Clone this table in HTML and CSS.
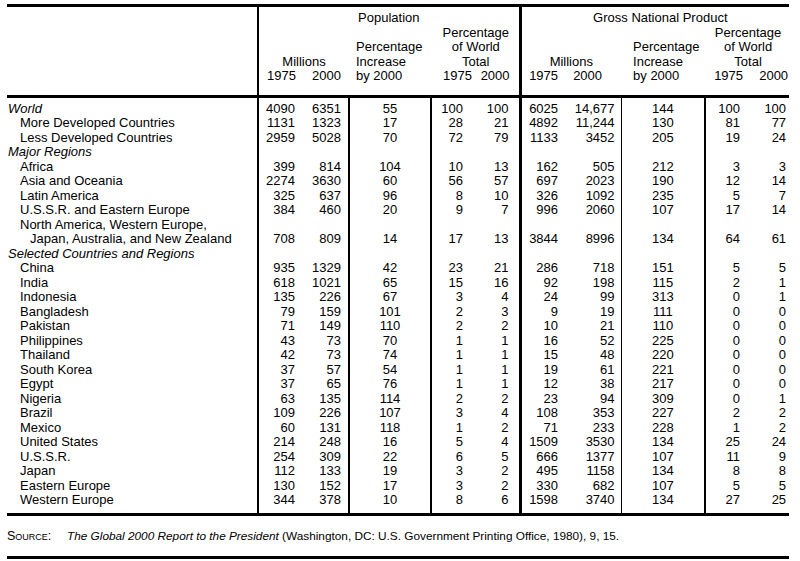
FILE: index.html
```html
<!DOCTYPE html>
<html>
<head>
<meta charset="utf-8">
<link rel="stylesheet" href="styles.css">
</head>
<body>
<div class="page">
  <div class="frame">
    <table class="data">
      <colgroup>
        <col class="w-label"><col class="w-p75"><col class="w-p00"><col class="w-pinc"><col class="w-pw75"><col class="w-pw00">
        <col class="w-g75"><col class="w-g00"><col class="w-ginc"><col class="w-gw75"><col class="w-gw00">
      </colgroup>
      <thead>
        <tr class="h1">
          <th class="corner" rowspan="3"></th>
          <th class="grp" colspan="5">Population</th>
          <th class="grp gnp" colspan="5">Gross National Product</th>
        </tr>
        <tr class="h2">
          <th class="mil" colspan="2">Millions</th>
          <th class="inc pinc" rowspan="2">Percentage<br>Increase<br>by 2000</th>
          <th class="wt" colspan="2">Percentage<br>of World<br>Total</th>
          <th class="mil gnp" colspan="2">Millions</th>
          <th class="inc ginc" rowspan="2">Percentage<br>Increase<br>by 2000</th>
          <th class="wt" colspan="2">Percentage<br>of World<br>Total</th>
        </tr>
        <tr class="h3">
          <th class="yr y-p75">1975</th>
          <th class="yr y-p00">2000</th>
          <th class="yr y-pw75">1975</th>
          <th class="yr y-pw00">2000</th>
          <th class="yr y-g75 gnp">1975</th>
          <th class="yr y-g00">2000</th>
          <th class="yr y-gw75">1975</th>
          <th class="yr y-gw00">2000</th>
        </tr>
      </thead>
      <tbody>
        <tr><td class="sec">World</td><td>4090</td><td>6351</td><td>55</td><td>100</td><td>100</td><td>6025</td><td>14,677</td><td>144</td><td>100</td><td>100</td></tr>
        <tr><td class="sub">More Developed Countries</td><td>1131</td><td>1323</td><td>17</td><td>28</td><td>21</td><td>4892</td><td>11,244</td><td>130</td><td>81</td><td>77</td></tr>
        <tr><td class="sub">Less Developed Countries</td><td>2959</td><td>5028</td><td>70</td><td>72</td><td>79</td><td>1133</td><td>3452</td><td>205</td><td>19</td><td>24</td></tr>
        <tr><td class="sec">Major Regions</td><td></td><td></td><td></td><td></td><td></td><td></td><td></td><td></td><td></td><td></td></tr>
        <tr><td class="sub">Africa</td><td>399</td><td>814</td><td>104</td><td>10</td><td>13</td><td>162</td><td>505</td><td>212</td><td>3</td><td>3</td></tr>
        <tr><td class="sub">Asia and Oceania</td><td>2274</td><td>3630</td><td>60</td><td>56</td><td>57</td><td>697</td><td>2023</td><td>190</td><td>12</td><td>14</td></tr>
        <tr><td class="sub">Latin America</td><td>325</td><td>637</td><td>96</td><td>8</td><td>10</td><td>326</td><td>1092</td><td>235</td><td>5</td><td>7</td></tr>
        <tr><td class="sub">U.S.S.R. and Eastern Europe</td><td>384</td><td>460</td><td>20</td><td>9</td><td>7</td><td>996</td><td>2060</td><td>107</td><td>17</td><td>14</td></tr>
        <tr><td class="sub">North America, Western Europe,</td><td></td><td></td><td></td><td></td><td></td><td></td><td></td><td></td><td></td><td></td></tr>
        <tr><td class="sub2">Japan, Australia, and New Zealand</td><td>708</td><td>809</td><td>14</td><td>17</td><td>13</td><td>3844</td><td>8996</td><td>134</td><td>64</td><td>61</td></tr>
        <tr><td class="sec">Selected Countries and Regions</td><td></td><td></td><td></td><td></td><td></td><td></td><td></td><td></td><td></td><td></td></tr>
        <tr><td class="sub">China</td><td>935</td><td>1329</td><td>42</td><td>23</td><td>21</td><td>286</td><td>718</td><td>151</td><td>5</td><td>5</td></tr>
        <tr><td class="sub">India</td><td>618</td><td>1021</td><td>65</td><td>15</td><td>16</td><td>92</td><td>198</td><td>115</td><td>2</td><td>1</td></tr>
        <tr><td class="sub">Indonesia</td><td>135</td><td>226</td><td>67</td><td>3</td><td>4</td><td>24</td><td>99</td><td>313</td><td>0</td><td>1</td></tr>
        <tr><td class="sub">Bangladesh</td><td>79</td><td>159</td><td>101</td><td>2</td><td>3</td><td>9</td><td>19</td><td>111</td><td>0</td><td>0</td></tr>
        <tr><td class="sub">Pakistan</td><td>71</td><td>149</td><td>110</td><td>2</td><td>2</td><td>10</td><td>21</td><td>110</td><td>0</td><td>0</td></tr>
        <tr><td class="sub">Philippines</td><td>43</td><td>73</td><td>70</td><td>1</td><td>1</td><td>16</td><td>52</td><td>225</td><td>0</td><td>0</td></tr>
        <tr><td class="sub">Thailand</td><td>42</td><td>73</td><td>74</td><td>1</td><td>1</td><td>15</td><td>48</td><td>220</td><td>0</td><td>0</td></tr>
        <tr><td class="sub">South Korea</td><td>37</td><td>57</td><td>54</td><td>1</td><td>1</td><td>19</td><td>61</td><td>221</td><td>0</td><td>0</td></tr>
        <tr><td class="sub">Egypt</td><td>37</td><td>65</td><td>76</td><td>1</td><td>1</td><td>12</td><td>38</td><td>217</td><td>0</td><td>0</td></tr>
        <tr><td class="sub">Nigeria</td><td>63</td><td>135</td><td>114</td><td>2</td><td>2</td><td>23</td><td>94</td><td>309</td><td>0</td><td>1</td></tr>
        <tr><td class="sub">Brazil</td><td>109</td><td>226</td><td>107</td><td>3</td><td>4</td><td>108</td><td>353</td><td>227</td><td>2</td><td>2</td></tr>
        <tr><td class="sub">Mexico</td><td>60</td><td>131</td><td>118</td><td>1</td><td>2</td><td>71</td><td>233</td><td>228</td><td>1</td><td>2</td></tr>
        <tr><td class="sub">United States</td><td>214</td><td>248</td><td>16</td><td>5</td><td>4</td><td>1509</td><td>3530</td><td>134</td><td>25</td><td>24</td></tr>
        <tr><td class="sub">U.S.S.R.</td><td>254</td><td>309</td><td>22</td><td>6</td><td>5</td><td>666</td><td>1377</td><td>107</td><td>11</td><td>9</td></tr>
        <tr><td class="sub">Japan</td><td>112</td><td>133</td><td>19</td><td>3</td><td>2</td><td>495</td><td>1158</td><td>134</td><td>8</td><td>8</td></tr>
        <tr><td class="sub">Eastern Europe</td><td>130</td><td>152</td><td>17</td><td>3</td><td>2</td><td>330</td><td>682</td><td>107</td><td>5</td><td>5</td></tr>
        <tr><td class="sub">Western Europe</td><td>344</td><td>378</td><td>10</td><td>8</td><td>6</td><td>1598</td><td>3740</td><td>134</td><td>27</td><td>25</td></tr>
      </tbody>
    </table>
  </div>
  <div class="source">
    <span class="src-label">Source:</span>
    <span class="src-text"><i>The Global 2000 Report to the President</i> (Washington, DC: U.S. Government Printing Office, 1980), 9, 15.</span>
  </div>
</div>
</body>
</html>
```
FILE: styles.css
```css
html, body {
  margin: 0;
  padding: 0;
  background: #fff;
}
body {
  font-family: "Liberation Sans", Arial, sans-serif;
  font-size: 13px;
  color: #000;
}
.page {
  padding: 4px 0 0 7px;
  width: 782px;
}
.frame {
  border-top: 3px solid #000;
  border-bottom: 3px solid #000;
}
.data {
  width: 782px;
  border-collapse: collapse;
  table-layout: fixed;
  line-height: 14.5px;
}
.w-label { width: 251px; }
.w-p75 { width: 45px; }
.w-p00 { width: 46px; }
.w-pinc { width: 82px; }
.w-pw75 { width: 43px; }
.w-pw00 { width: 46px; }
.w-g75 { width: 47px; }
.w-g00 { width: 54px; }
.w-ginc { width: 84px; }
.w-gw75 { width: 43px; }
.w-gw00 { width: 41px; }

th {
  font-weight: normal;
  padding: 0;
  white-space: nowrap;
}
thead th { border-bottom: 3px solid #000; }
.h1 th, .h2 th { border-bottom: 0; }
.corner { border-right: 2px solid #000; border-bottom: 3px solid #000 !important; }
.gnp { border-left: 3px solid #000; }
.h1 th { padding-top: 4px; text-align: center; }
.h1 .gnp { padding-left: 10px; }
.h2 th { vertical-align: bottom; text-align: center; }
.h2 .inc { text-align: left; padding-bottom: 11px; border-bottom: 3px solid #000; }
.h2 .pinc { padding-left: 7px; }
.h2 .ginc { padding-left: 12px; }
.h2 .wt { padding-left: 2px; }
.h3 th { text-align: right; padding-bottom: 11px; }
.y-p75 { padding-right: 7px !important; }
.y-p00 { padding-right: 8px !important; }
.y-pw75 { padding-right: 2px !important; }
.y-pw00 { padding-right: 9px !important; }
.y-g75 { padding-right: 9px !important; }
.y-g00 { padding-right: 19px !important; }
.y-gw75 { padding-right: 5px !important; }
.y-gw00 { padding-right: 1px !important; }

td {
  padding: 0;
  text-align: right;
  white-space: nowrap;
}
tbody tr:first-child td { padding-top: 4px; }
tbody tr:last-child td { padding-bottom: 5px; }
td:nth-child(1) { text-align: left; }
td:nth-child(2) { border-left: 2px solid #000; padding-right: 8px; }
td:nth-child(3) { padding-right: 7px; }
td:nth-child(4) { border-left: 2px solid #000; text-align: center; }
td:nth-child(5) { border-left: 2px solid #000; padding-right: 11px; }
td:nth-child(6) { padding-right: 10px; }
td:nth-child(7) { border-left: 3px solid #000; padding-right: 9px; }
td:nth-child(8) { padding-right: 6px; }
td:nth-child(9) { border-left: 1px solid #000; text-align: center; }
td:nth-child(10) { border-left: 2px solid #000; padding-right: 8px; }
td:nth-child(11) { padding-right: 3px; }

.sec { font-style: italic; padding-left: 1px; }
.sub { padding-left: 13px; }
.sub2 { padding-left: 23px; }

.source {
  display: flex;
  align-items: baseline;
  font-size: 11.8px;
  line-height: 14px;
  padding: 13px 0 13px 0;
  border-bottom: 3px solid #000;
}
.src-label {
  font-variant: small-caps;
  font-size: 12.5px;
  width: 60px;
  flex: none;
}
.src-text { white-space: nowrap; }
```
